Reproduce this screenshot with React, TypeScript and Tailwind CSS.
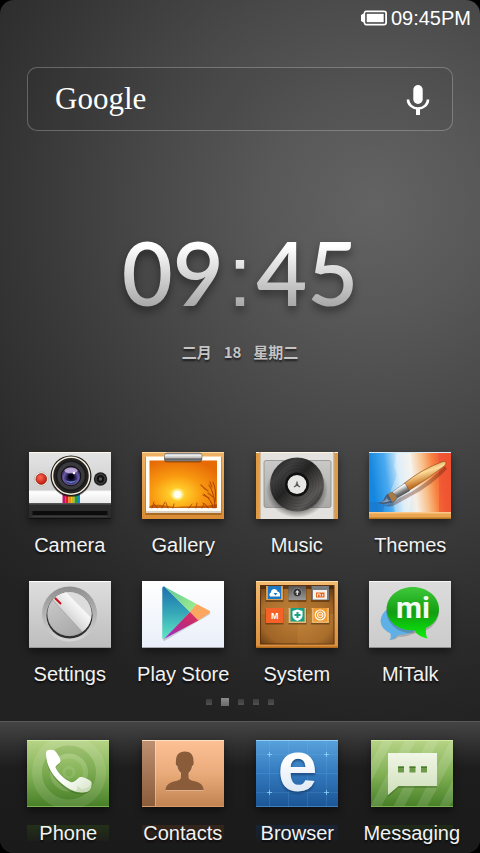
import type { ReactNode } from "react";

type AppItem = {
  name: string;
  icon: () => ReactNode;
  reflection?: string;
};

const homeApps: AppItem[] = [
  { name: "Camera", icon: CameraIcon },
  { name: "Gallery", icon: GalleryIcon },
  { name: "Music", icon: MusicIcon },
  { name: "Themes", icon: ThemesIcon },
  { name: "Settings", icon: SettingsIcon },
  { name: "Play Store", icon: PlayStoreIcon },
  { name: "System", icon: SystemIcon },
  { name: "MiTalk", icon: MiTalkIcon },
];

const dockApps: AppItem[] = [
  {
    name: "Phone",
    icon: PhoneIcon,
    reflection: "bg-linear-to-b from-[#243019] to-[#1c1f1a]",
  },
  {
    name: "Contacts",
    icon: ContactsIcon,
    reflection: "bg-linear-to-b from-[#35261c] to-[#211c19]",
  },
  {
    name: "Browser",
    icon: BrowserIcon,
    reflection: "bg-linear-to-b from-[#182434] to-[#1a1d22]",
  },
  {
    name: "Messaging",
    icon: MessagingIcon,
    reflection: "bg-linear-to-b from-[#202a18] to-[#1b1e1a]",
  },
];

export default function App() {
  return (
    <div className="min-h-screen bg-black font-['Liberation_Sans',Arial,sans-serif] text-white">
      <div className="flex min-h-screen flex-col overflow-hidden rounded-[14px] bg-[#222] bg-[radial-gradient(circle_at_78%_24%,#636363_0px,#585858_110px,#484848_230px,#373737_350px,#2a2a2a_450px,#222222_530px)]">
        <StatusBar />
        <SearchBar />
        <ClockWidget />

        <main className="grid grid-cols-4 gap-y-6 px-[13px]">
          {homeApps.map((app) => (
            <AppButton key={app.name} app={app} />
          ))}
        </main>

        <PageDots count={5} active={1} />

        <nav
          aria-label="Dock"
          className="grid grid-cols-4 border-t border-[#5a5a5a] bg-linear-to-b from-[#444] via-[#1d1d1d] via-35% to-[#1a1a1a] px-[11px] pt-[18px] pb-2"
        >
          {dockApps.map((app) => (
            <AppButton key={app.name} app={app} />
          ))}
        </nav>
      </div>
    </div>
  );
}

function StatusBar() {
  return (
    <header className="flex h-9 items-center justify-end gap-1 px-[9px] text-xl">
      <svg width="26" height="16" viewBox="0 0 26 16" aria-label="Battery">
        <path
          d="M5 0.500h18a3 3 0 0 1 3 3v9a3 3 0 0 1-3 3H5c-1.500 0-2-1-2.500-3L0 11V5l2.500-1.500C3 1.500 3.500 0.500 5 0.500z"
          fill="#fff"
        />
        <rect x="4.200" y="2.300" width="20" height="11.400" rx="1" fill="#484848" />
        <rect x="5.700" y="3.800" width="17" height="8.400" fill="#fff" />
      </svg>
      <time>09:45PM</time>
    </header>
  );
}

function SearchBar() {
  return (
    <form
      role="search"
      onSubmit={(e) => e.preventDefault()}
      className="mx-[27px] mt-[31px] flex h-16 items-center rounded-[10px] border border-white/25 bg-black/5 pr-[22px] pl-[27px]"
    >
      <label
        htmlFor="search"
        className="font-['Liberation_Serif',serif] text-[31px] leading-9"
      >
        Google
      </label>
      <input
        id="search"
        type="text"
        className="min-w-0 flex-1 bg-transparent px-3 text-xl outline-none"
      />
      <button type="button" aria-label="Voice search">
        <svg width="24" height="32" viewBox="0 0 24 32">
          <rect x="7.300" y="2" width="9.400" height="19" rx="4.700" fill="#fff" />
          <path
            d="M2 16.500a10 9 0 0 0 20 0"
            fill="none"
            stroke="#fff"
            strokeWidth="2.600"
          />
          <path d="M10 25h4v7h-4z" fill="#fff" />
        </svg>
      </button>
    </form>
  );
}

function ClockWidget() {
  return (
    <section className="flex flex-1 flex-col items-center justify-center pt-[14px] pb-2">
      <div className="drop-shadow-[0_5px_4px_rgba(0,0,0,0.4)]">
        <time className="flex items-baseline gap-1 bg-linear-to-b from-white from-20% to-[#a8a8a8] to-85% bg-clip-text font-[Lato] text-[88px] leading-[88px] font-semibold text-transparent">
          <span>09</span>
          <span className="font-['Liberation_Sans'] font-normal">:</span>
          <span>45</span>
        </time>
      </div>
      <p className="mt-[22px] flex gap-3 font-['Noto_Sans_CJK_SC',sans-serif] text-[15px] leading-5 font-bold text-[#c4c4c4] [text-shadow:0_2px_2px_rgba(0,0,0,0.6)]">
        <span>二月</span>
        <span>18</span>
        <span>星期二</span>
      </p>
    </section>
  );
}

function AppButton({ app }: { app: AppItem }) {
  const Icon = app.icon;
  return (
    <button type="button" className="flex flex-col items-center">
      <span className="shadow-[0_4px_8px_rgba(0,0,0,0.45)]">
        <Icon />
      </span>
      <span className="relative mt-[14px] text-xl leading-6 whitespace-nowrap text-[#f2f2f2] [text-shadow:0_2px_2px_rgba(0,0,0,0.7)]">
        {app.reflection && (
          <span
            className={`absolute top-1 left-1/2 h-4 w-[82px] -translate-x-1/2 ${app.reflection}`}
          />
        )}
        <span className="relative">{app.name}</span>
      </span>
    </button>
  );
}

function PageDots({ count, active }: { count: number; active: number }) {
  return (
    <div className="mt-3 mb-[15px] flex h-2 items-center justify-center gap-[9px]">
      {Array.from({ length: count }, (_, i) => (
        <span
          key={i}
          className={
            i === active
              ? "size-2 bg-linear-to-b from-[#8c8c8c] to-[#6a6a6a]"
              : "size-1.5 bg-linear-to-b from-[#3c3c3c] to-[#505050]"
          }
        />
      ))}
    </div>
  );
}

// Every launcher icon shares the same 82x67 canvas
function Tile({ children }: { children: ReactNode }) {
  return (
    <svg
      width="82"
      height="67"
      viewBox="0 0 82 67"
      className="block overflow-visible"
      aria-hidden="true"
    >
      {children}
    </svg>
  );
}

function CameraIcon() {
  return (
    <Tile>
      <defs>
        <linearGradient id="camBody" x1="0" y1="0" x2="0" y2="1">
          <stop offset="0" stopColor="#e4e4e4" />
          <stop offset="0.740" stopColor="#cfcfcf" />
          <stop offset="0.780" stopColor="#ffffff" />
          <stop offset="1" stopColor="#e8e8e8" />
        </linearGradient>
        <radialGradient id="camLens" cx="0.500" cy="0.600" r="0.550">
          <stop offset="0" stopColor="#0c0a20" />
          <stop offset="0.350" stopColor="#1d1a4a" />
          <stop offset="0.700" stopColor="#6a5aa8" />
          <stop offset="1" stopColor="#2a1c34" />
        </radialGradient>
        <radialGradient id="camRed" cx="0.400" cy="0.350" r="0.700">
          <stop offset="0" stopColor="#ff6a55" />
          <stop offset="1" stopColor="#b81408" />
        </radialGradient>
      </defs>
      <rect width="82" height="67" fill="#2c2c2c" />
      <rect width="82" height="51" fill="url(#camBody)" />
      <rect width="82" height="1" fill="#fff8e8" />
      <rect y="51" width="82" height="1.500" fill="#555" />
      <rect x="3.500" y="59" width="75" height="5" fill="#0c0c0c" />
      <rect x="3.500" y="63.500" width="75" height="1" fill="#505050" />
      <rect y="66" width="82" height="1" fill="#111" />
      <rect x="33.500" y="42" width="3" height="9" fill="#c4126e" />
      <rect x="36.500" y="42" width="3" height="9" fill="#e0201c" />
      <rect x="39.500" y="42" width="3" height="9" fill="#ef8f10" />
      <rect x="42.500" y="42" width="3" height="9" fill="#c9b50e" />
      <rect x="45.500" y="42" width="2.500" height="9" fill="#2d9c35" />
      <rect x="48" y="42" width="3" height="9" fill="#1488c8" />
      <circle cx="42" cy="24.500" r="20.500" fill="#000" opacity="0.500" />
      <circle cx="42" cy="23.700" r="20.300" fill="#1c1a18" />
      <circle cx="42" cy="23.700" r="18.500" fill="#232323" stroke="#f3ead8" strokeWidth="1.500" />
      <circle cx="42" cy="23.700" r="14.500" fill="#3a3a3e" stroke="#191919" strokeWidth="1.500" />
      <circle cx="42" cy="24" r="9.800" fill="url(#camLens)" stroke="#111" />
      <ellipse cx="42" cy="18.500" rx="6.500" ry="3" fill="#d9c4f0" opacity="0.750" />
      <path d="M36 28q6 6 12 0q-6 3-12 0z" fill="#7fb4ff" opacity="0.800" />
      <circle cx="42" cy="24.500" r="3" fill="#05040d" />
      <circle cx="45" cy="21" r="1.200" fill="#fff" />
      <circle cx="12.300" cy="27" r="7" fill="#f4f2ee" stroke="#b0aeaa" strokeWidth="0.600" />
      <circle cx="12.300" cy="27" r="5.400" fill="url(#camRed)" stroke="#8a1208" strokeWidth="0.600" />
      <circle cx="71.500" cy="27" r="6.700" fill="#222" />
      <circle cx="71.500" cy="27" r="4.500" fill="#111" stroke="#4b4b4b" />
      <circle cx="71.500" cy="27" r="1.700" fill="#555" />
    </Tile>
  );
}

function GalleryIcon() {
  return (
    <Tile>
      <defs>
        <linearGradient id="galWood" x1="0" y1="0" x2="0" y2="1">
          <stop offset="0" stopColor="#efb266" />
          <stop offset="1" stopColor="#d98c35" />
        </linearGradient>
        <radialGradient id="galSky" cx="0.410" cy="0.700" r="0.750">
          <stop offset="0" stopColor="#fff27a" />
          <stop offset="0.180" stopColor="#ffc928" />
          <stop offset="0.500" stopColor="#f99a10" />
          <stop offset="1" stopColor="#e66a06" />
        </radialGradient>
        <linearGradient id="galClip" x1="0" y1="0" x2="0" y2="1">
          <stop offset="0" stopColor="#777" />
          <stop offset="0.250" stopColor="#f5f5f5" />
          <stop offset="0.600" stopColor="#b8b8b8" />
          <stop offset="0.750" stopColor="#555" />
          <stop offset="1" stopColor="#999" />
        </linearGradient>
      </defs>
      <rect width="82" height="67" fill="url(#galWood)" />
      <rect width="82" height="1" fill="#ffd9a0" />
      <rect x="3.500" y="5" width="76" height="58" fill="#8a5212" opacity="0.600" />
      <rect x="4" y="4.500" width="75" height="56.500" fill="#fffdf6" />
      <rect x="4" y="59" width="75" height="2" fill="#d9d2c4" />
      <rect x="7.500" y="8.500" width="67.500" height="47.500" fill="url(#galSky)" />
      <circle cx="35.500" cy="42.500" r="6" fill="#fff6a0" opacity="0.600" />
      <circle cx="35.500" cy="42.500" r="3.800" fill="#fffef0" />
      <path
        d="M7.500 56v-2q6-2 12-1t14 2q14-1 24-1t17.500-2v4z"
        fill="#a23c05"
        opacity="0.600"
      />
      <g fill="none" stroke="#a23c05" strokeLinecap="round">
        <path d="M10 56l2-6M15 56l-3-4M20 56l3-6M26 56l-2-5M31 56l1-4M47 56l3-4M54 56l1-5M60 56l2-4" strokeWidth="0.800" />
        <path d="M73 56q0-14-6-23M71 56q-1-8-9-14M73 50q2-12-2-20M66 56q-2-4-5-5" strokeWidth="0.900" />
        <path d="M63 37l-4-4M66 39l-5-4M70 35l-2-5M71 45l-5-4M67 46l-6-3" strokeWidth="1.200" opacity="0.700" />
      </g>
      <rect x="22" y="3" width="38" height="7.500" rx="3" fill="#5a3208" opacity="0.500" />
      <rect x="22.500" y="1" width="37.500" height="8" rx="2.500" fill="url(#galClip)" stroke="#555" strokeWidth="0.500" />
    </Tile>
  );
}

function MusicIcon() {
  return (
    <Tile>
      <defs>
        <linearGradient id="musPlate" x1="0" y1="0" x2="0" y2="1">
          <stop offset="0" stopColor="#c9c9c7" />
          <stop offset="1" stopColor="#a9a9a7" />
        </linearGradient>
        <linearGradient id="musDisc" x1="0" y1="0" x2="1" y2="1">
          <stop offset="0" stopColor="#1c1c1c" />
          <stop offset="0.250" stopColor="#3f3f3f" />
          <stop offset="0.450" stopColor="#242424" />
          <stop offset="0.750" stopColor="#5c5a58" />
          <stop offset="1" stopColor="#1a1a1a" />
        </linearGradient>
        <radialGradient id="musShade">
          <stop offset="0.700" stopColor="#000" stopOpacity="0.500" />
          <stop offset="1" stopColor="#000" stopOpacity="0" />
        </radialGradient>
      </defs>
      <rect width="82" height="67" fill="#df9a43" />
      <rect x="3.500" width="75" height="67" fill="#e3e2de" />
      <rect width="82" height="1" fill="#fff6e4" />
      <rect x="3.500" width="1" height="67" fill="#a86a20" opacity="0.600" />
      <rect x="77.500" width="1" height="67" fill="#a86a20" opacity="0.600" />
      <rect x="8" y="8.500" width="67" height="47" rx="2" fill="url(#musPlate)" stroke="#8e8e8c" strokeWidth="0.800" />
      <ellipse cx="41" cy="38" rx="31" ry="28" fill="url(#musShade)" />
      <circle cx="41" cy="32.500" r="27" fill="url(#musDisc)" />
      <g fill="none" stroke="#000" strokeOpacity="0.150" strokeWidth="0.700">
        <circle cx="41" cy="32.500" r="25" />
        <circle cx="41" cy="32.500" r="22" />
        <circle cx="41" cy="32.500" r="19" />
        <circle cx="41" cy="32.500" r="16" />
      </g>
      <circle cx="41" cy="32.500" r="12" fill="#101010" />
      <circle cx="41" cy="32.500" r="9.500" fill="#e6e6e4" />
      <path d="M41 29.500v3.500l-3 2M41 33l3 2" fill="none" stroke="#555" strokeWidth="1.300" />
      <circle cx="41" cy="32.800" r="1.400" fill="#555" />
    </Tile>
  );
}

function ThemesIcon() {
  return (
    <Tile>
      <defs>
        <linearGradient id="thPaint" x1="0" y1="0.100" x2="1" y2="0">
          <stop offset="0" stopColor="#1487e0" />
          <stop offset="0.180" stopColor="#49a9ef" />
          <stop offset="0.340" stopColor="#cfe8f7" />
          <stop offset="0.500" stopColor="#f6efe6" />
          <stop offset="0.640" stopColor="#f8bf88" />
          <stop offset="0.760" stopColor="#f8813f" />
          <stop offset="0.850" stopColor="#f2603a" />
          <stop offset="1" stopColor="#ee5434" />
        </linearGradient>
        <linearGradient id="thHandle" x1="0" y1="0" x2="0.450" y2="1">
          <stop offset="0.200" stopColor="#d08a3a" />
          <stop offset="0.480" stopColor="#ffdc9a" />
          <stop offset="0.800" stopColor="#c07022" />
        </linearGradient>
        <linearGradient id="thMetal" x1="0" y1="0" x2="0.600" y2="1">
          <stop offset="0.100" stopColor="#666" />
          <stop offset="0.400" stopColor="#fff" />
          <stop offset="0.700" stopColor="#777" />
          <stop offset="1" stopColor="#333" />
        </linearGradient>
      </defs>
      <rect width="82" height="67" fill="#e9a550" />
      <rect width="82" height="60.500" fill="url(#thPaint)" />
      <path d="M28 0l-3 14 3 9-6 15 4 22h14l4-26-2-34z" fill="#fff" opacity="0.300" />
      <path d="M0 50h16l-2 10.500H0z" fill="#1a6fc0" opacity="0.450" />
      <path d="M70 0h12v60.500H70z" fill="#ee4d2b" opacity="0.500" />
      <rect width="82" height="1" fill="#d6ecfa" />
      <rect y="60" width="82" height="1.500" fill="#f8c888" />
      <rect y="65.500" width="82" height="1.500" fill="#b97422" />
      <path d="M14 53q10 0 16-7l12-6q20-12 34-26l2 3Q62 34 42 44L26 53q-6 3-12 0z" fill="#5a1a08" opacity="0.350" />
      <path d="M35 31.500Q53 17 74 9.500q3-.5 3 1.500 0 2-3 4Q60 26 40 38.500z" fill="url(#thHandle)" stroke="#96531a" strokeWidth="0.700" />
      <path d="M36 31l4.500 8L28 46q-3-2-5-6z" fill="url(#thMetal)" stroke="#444" strokeWidth="0.400" />
      <path d="M23 40q4 2 5.500 6-3 6-10 5.500-5 1-10-.5 6-1 7-5t7.500-6z" fill="#4a5d74" />
      <path d="M22.500 40q4 2 5.500 6-2 3-5 4-2-5-4-8z" fill="#a97a45" />
      <path d="M12 50q5-1 6-5 0 4 4 3-4 3-10 2z" fill="#7f9fc6" />
    </Tile>
  );
}

function SettingsIcon() {
  return (
    <Tile>
      <defs>
        <linearGradient id="setBg" x1="0" y1="0" x2="0" y2="1">
          <stop offset="0" stopColor="#dedede" />
          <stop offset="1" stopColor="#bdbdbd" />
        </linearGradient>
        <linearGradient id="setRing" x1="0" y1="0" x2="0" y2="1">
          <stop offset="0" stopColor="#8f8f8f" />
          <stop offset="1" stopColor="#d6d6d6" />
        </linearGradient>
        <linearGradient id="setBand" gradientUnits="userSpaceOnUse" x1="38" y1="36" x2="50" y2="24">
          <stop offset="0" stopColor="#d2d2d2" />
          <stop offset="0.500" stopColor="#e8e8e8" />
          <stop offset="1" stopColor="#f8f8f8" />
        </linearGradient>
        <linearGradient id="setLow" x1="0" y1="0" x2="0.600" y2="1">
          <stop offset="0" stopColor="#cfcfcf" />
          <stop offset="1" stopColor="#a8a8a8" />
        </linearGradient>
        <clipPath id="setKnob">
          <circle cx="40.500" cy="33" r="22" />
        </clipPath>
      </defs>
      <rect width="82" height="67" fill="url(#setBg)" />
      <rect width="82" height="1" fill="#fff" />
      <rect y="66" width="82" height="1" fill="#999" />
      <circle cx="40.500" cy="33" r="27.500" fill="url(#setRing)" />
      <circle cx="40.500" cy="34.500" r="23" fill="#2e2e2e" />
      <circle cx="40.500" cy="33" r="22.300" fill="#777" />
      <g clipPath="url(#setKnob)">
        <rect x="18" y="10" width="46" height="46" fill="url(#setLow)" />
        <path d="M30 6h38v38z" fill="#dcdcdc" />
        <path d="M20 15L31 5l37 38-11 12z" fill="url(#setBand)" />
        <path d="M20 15l37 40" stroke="#999" strokeWidth="0.600" />
        <path d="M54 52l10-12 4 8-9 10z" fill="#3a3a3a" />
      </g>
      <path d="M26 17l6 6" stroke="#c8101c" strokeWidth="2" />
    </Tile>
  );
}

function PlayStoreIcon() {
  return (
    <Tile>
      <defs>
        <linearGradient id="playBg" x1="0" y1="0" x2="0" y2="1">
          <stop offset="0" stopColor="#ffffff" />
          <stop offset="1" stopColor="#e9eff9" />
        </linearGradient>
        <linearGradient id="playBlue" x1="0" y1="0" x2="0" y2="1">
          <stop offset="0" stopColor="#1c6fae" />
          <stop offset="0.500" stopColor="#35a7b8" />
          <stop offset="1" stopColor="#5fe6c4" />
        </linearGradient>
        <linearGradient id="playGreen" x1="0" y1="0" x2="1" y2="1">
          <stop offset="0" stopColor="#5cc79a" />
          <stop offset="1" stopColor="#a4f08c" />
        </linearGradient>
        <linearGradient id="playPurple" x1="0" y1="1" x2="1" y2="0">
          <stop offset="0" stopColor="#9a2fd0" />
          <stop offset="0.600" stopColor="#c22a72" />
          <stop offset="1" stopColor="#e0325c" />
        </linearGradient>
      </defs>
      <rect width="82" height="67" fill="url(#playBg)" />
      <rect y="66" width="82" height="1" fill="#a8aab0" />
      <path d="M20.500 8l48 25-46 27q-2 0-2-2z" fill="#8b95a8" opacity="0.400" />
      <path d="M20.300 7q0-2 2-1.500L48 31 22.500 57.500q-2.200 1-2.200-1z" fill="url(#playBlue)" />
      <path d="M22 5.400L54.700 23 48 31z" fill="url(#playGreen)" />
      <path d="M54.700 23L67 29.500q2.500 1.500 0 3L56.300 39.500 48 31z" fill="#fba75f" />
      <path d="M48 31l8.300 8.500L22 58z" fill="url(#playPurple)" />
    </Tile>
  );
}

function SystemIcon() {
  return (
    <Tile>
      <defs>
        <linearGradient id="sysFrame" x1="0" y1="0" x2="0" y2="1">
          <stop offset="0" stopColor="#f3bb70" />
          <stop offset="1" stopColor="#d98e3a" />
        </linearGradient>
        <radialGradient id="sysBack" cx="0.500" cy="0.550" r="0.700">
          <stop offset="0" stopColor="#bd8038" />
          <stop offset="0.700" stopColor="#a06526" />
          <stop offset="1" stopColor="#603610" />
        </radialGradient>
        <linearGradient id="sysGray" x1="0" y1="0" x2="0" y2="1">
          <stop offset="0" stopColor="#555" />
          <stop offset="1" stopColor="#999" />
        </linearGradient>
      </defs>
      <rect width="82" height="67" fill="url(#sysFrame)" />
      <rect width="82" height="1" fill="#ffe0ae" />
      <rect y="65.500" width="82" height="1.500" fill="#b06a1e" />
      <rect x="4.500" y="4.500" width="73.500" height="58.500" fill="url(#sysBack)" stroke="#5c330e" />
      <path d="M41.500 33h36v30h-36zM5 5h36.500v28H5z" fill="#e0a050" opacity="0.160" />
      <rect x="5" y="5" width="72.500" height="3" fill="#3a1e06" opacity="0.600" />
      <g fill="#3c2005" opacity="0.500">
        <rect x="9.500" y="6" width="18" height="15" />
        <rect x="32.500" y="6" width="18" height="15" />
        <rect x="55" y="6" width="18.500" height="15" />
        <rect x="9.500" y="28" width="18" height="15.500" />
        <rect x="32.500" y="28" width="18" height="15.500" />
        <rect x="55" y="28" width="18.500" height="15.500" />
      </g>
      <rect x="10" y="5" width="17" height="14" fill="#dba055" />
      <rect x="12" y="5" width="13" height="13" fill="#1d78c4" />
      <path d="M14 15.500q-1.500-3 1-4 0-3.500 3.500-3.500 2.500 0 3 2.500 3 .5 2.500 5z" fill="#fff" />
      <path d="M17.500 12h4l-2 2.500z" fill="#1d78c4" />
      <rect x="32.500" y="5" width="17.500" height="14" fill="url(#sysGray)" />
      <circle cx="41.300" cy="11.500" r="4.300" fill="#333" stroke="#aaa" strokeWidth="0.600" />
      <path d="M41.300 9l2.200 2.500h-1.500v2.500h-1.400v-2.500h-1.500z" fill="#ddd" />
      <rect x="55.500" y="5" width="17.500" height="14" fill="#777c80" />
      <rect x="57" y="9" width="14" height="9.500" fill="#f5f2ee" />
      <rect x="60" y="11.500" width="8.500" height="5" fill="#e8641a" />
      <path d="M61.500 15.500v-2.500h2.700v2.500M66.700 13v2.500" fill="none" stroke="#fff" strokeWidth="0.900" />
      <rect x="10" y="27" width="17.500" height="15" fill="#f4622a" />
      <text
        x="18.700"
        y="38"
        fontSize="9"
        fontWeight="700"
        textAnchor="middle"
        fill="#fff"
        className="font-['Liberation_Sans']"
      >
        M
      </text>
      <rect x="32.500" y="27" width="17.500" height="15" fill="#e8bc7c" />
      <rect x="34.500" y="27" width="14" height="13.500" fill="#16a085" />
      <path d="M41.500 28.500l5 1.500v4.500q0 3.500-5 5.500-5-2-5-5.500V30z" fill="#fff" />
      <path d="M40.500 31h2v2h2v2h-2v2h-2v-2h-2v-2h2z" fill="#16a085" />
      <rect x="55.500" y="27" width="17.500" height="15" fill="#e9b873" />
      <rect x="57.500" y="27" width="13.500" height="13.500" fill="#f09a30" />
      <circle cx="64.200" cy="34" r="5" fill="none" stroke="#fff" strokeWidth="1.200" />
      <circle cx="64.200" cy="34" r="2.800" fill="none" stroke="#fff" strokeWidth="1" />
      <path d="M62.500 34h3.500" stroke="#fff" />
    </Tile>
  );
}

function MiTalkIcon() {
  return (
    <Tile>
      <defs>
        <linearGradient id="talkBg" x1="0" y1="0" x2="0" y2="1">
          <stop offset="0" stopColor="#dcdcdc" />
          <stop offset="1" stopColor="#cbcbcb" />
        </linearGradient>
        <linearGradient id="talkGreen" x1="0" y1="0" x2="0" y2="1">
          <stop offset="0" stopColor="#3ec83a" />
          <stop offset="0.500" stopColor="#129e12" />
          <stop offset="0.750" stopColor="#0cc80c" />
          <stop offset="1" stopColor="#12ea12" />
        </linearGradient>
      </defs>
      <rect width="82" height="67" fill="url(#talkBg)" />
      <rect width="82" height="1" fill="#f6f6f6" />
      <rect y="66" width="82" height="1" fill="#8f8f8f" />
      <path d="M20 27q-8 5-8.500 13 .5 8 10 12.500 1 4-1 6.500 6-1 8-5 12 0 18-5z" fill="#5fb0e6" />
      <path d="M20 59q7-2 8-5 12 0 17-4v2q-6 4-16 4-2 3-9 3z" fill="#777" opacity="0.400" />
      <ellipse cx="43.700" cy="30" rx="26.500" ry="22.500" fill="#333" opacity="0.250" />
      <path
        d="M43.700 6C58 6 70 15.500 70 28c0 8.500-5 15.500-13 19-.5 4 0 7.500 1.500 10.500-6-1-11-4-13-8.200C29 50 17.700 40.500 17.700 28 17.700 15.500 29.500 6 43.700 6z"
        fill="url(#talkGreen)"
      />
      <text
        x="44"
        y="37"
        fontSize="30"
        fontWeight="700"
        textAnchor="middle"
        fill="#f4fbf2"
        className="font-[Roboto]"
      >
        mi
      </text>
    </Tile>
  );
}

function PhoneIcon() {
  return (
    <Tile>
      <defs>
        <linearGradient id="phBg" x1="0" y1="0" x2="0" y2="1">
          <stop offset="0" stopColor="#b6d486" />
          <stop offset="0.500" stopColor="#83b156" />
          <stop offset="1" stopColor="#467f26" />
        </linearGradient>
        <linearGradient id="phSet" x1="0" y1="0" x2="1" y2="1">
          <stop offset="0.500" stopColor="#ffffff" />
          <stop offset="1" stopColor="#d5e4c4" />
        </linearGradient>
        <clipPath id="phTile">
          <rect width="82" height="67" />
        </clipPath>
      </defs>
      <rect width="82" height="67" fill="url(#phBg)" />
      <rect width="82" height="1" fill="#d3eaa6" />
      <rect y="66" width="82" height="1" fill="#7bb04e" />
      <g
        fill="none"
        stroke="#fff"
        strokeOpacity="0.100"
        clipPath="url(#phTile)"
      >
        <circle cx="42" cy="32.500" r="32" strokeWidth="10" />
        <circle cx="42" cy="32.500" r="16.500" strokeWidth="5" />
        <circle cx="42" cy="32.500" r="5" strokeWidth="3" />
      </g>
      <circle cx="42" cy="32.500" r="23" fill="none" stroke="#2e6a18" strokeOpacity="0.120" strokeWidth="8" />
      <path
        d="M19 14.500c0-3 3-4 6-4 2 0 7 6.500 8.500 11.500-.5 3-4.500 3.500-5 6.500 2 5 9 13 15 15.500 4 1.500 7-5 9.500-6 3-1 10 2.500 11.500 5 .5 4.500-.5 8-3.500 9.500-7 3.500-17 1.500-27-7.500s-15-19-15-30.500z"
        fill="#2d5c18"
        opacity="0.350"
      />
      <path
        d="M19 13c0-3 3-3.500 6-3 3 0 3 1 4 2 2 3 4.500 6 4.500 9-.5 3-4.500 3.500-5 6.500 2 5 9 12 15 14.500 4 1.500 7-4 9.500-5 3-.5 10 2.500 11.500 5 .5 4.500-.5 8-3.500 9.500-7 2.500-17 .5-27-8.500S19 24.500 19 13z"
        fill="url(#phSet)"
      />
      <path d="M50 46l5 3q5 0 9-4-.5 5-3.500 6.500-6 2-14 0 5-1 3.500-5.500z" fill="#b9cfa4" opacity="0.500" />
    </Tile>
  );
}

function ContactsIcon() {
  return (
    <Tile>
      <defs>
        <linearGradient id="conBg" x1="0" y1="0" x2="0" y2="1">
          <stop offset="0" stopColor="#fdc195" />
          <stop offset="0.500" stopColor="#eaab7b" />
          <stop offset="1" stopColor="#c08350" />
        </linearGradient>
        <linearGradient id="conSpine" x1="0" y1="0" x2="0" y2="1">
          <stop offset="0" stopColor="#bd9072" />
          <stop offset="1" stopColor="#8a5c3a" />
        </linearGradient>
      </defs>
      <rect width="82" height="67" fill="url(#conBg)" />
      <rect width="13" height="67" fill="url(#conSpine)" />
      <rect x="13" width="1" height="67" fill="#fff" opacity="0.300" />
      <rect width="82" height="1" fill="#ffe0c4" />
      <rect y="66" width="82" height="1" fill="#d79a68" />
      <path
        d="M24 51c.5-5 3-7 8-8.500 5-1 7-2 7-5V34c-2-2-3.300-4-3.500-7-1.500-.5-2-2-1.500-5 0-6 3-10 8.700-10s9 4 8.800 10c.5 3 0 4.500-1.500 5-.2 3-1.500 5-3.500 7v3.500c0 3 2 4 7 5 5 1.500 7.700 3.500 8.200 8.500z"
        fill="#fff"
        opacity="0.250"
      />
      <path
        d="M23.500 50c.5-5 3.500-7 8.500-8.500 5-1 7-2 7-5V33c-2-2-3.300-4-3.500-7-1.500-.5-2-2-1.500-5 0-6 3-9.500 8.700-9.500s9 3.500 8.800 9.500c.5 3 0 4.500-1.500 5-.2 3-1.500 5-3.500 7v3.500c0 3 2 4 7 5 5 1.500 7.700 3.500 8.200 8.500z"
        fill="#8a5c3a"
      />
    </Tile>
  );
}

function BrowserIcon() {
  return (
    <Tile>
      <defs>
        <linearGradient id="brBg" x1="0" y1="0" x2="0" y2="1">
          <stop offset="0" stopColor="#58a2dc" />
          <stop offset="0.500" stopColor="#3279bd" />
          <stop offset="1" stopColor="#1b5596" />
        </linearGradient>
        <linearGradient id="brE" x1="0" y1="0" x2="0" y2="1">
          <stop offset="0.400" stopColor="#ffffff" />
          <stop offset="1" stopColor="#cfdff0" />
        </linearGradient>
      </defs>
      <rect width="82" height="67" fill="url(#brBg)" />
      <rect width="82" height="1" fill="#94cdf5" />
      <rect y="66" width="82" height="1" fill="#3c80bf" />
      <path
        d="M13.500 0v67M32.500 0v67M51.500 0v67M70.500 0v67M0 14.500h82M0 33.500h82M0 52.500h82"
        stroke="#8cd0ff"
        strokeOpacity="0.180"
        strokeWidth="0.800"
      />
      <path
        d="M13.500 12v5M11 14.500h5M70.500 12v5M68 14.500h5M13.500 50v5M11 52.500h5M70.500 50v5M68 52.500h5"
        stroke="#8fe0ff"
        strokeOpacity="0.700"
      />
      <text
        x="41.500"
        y="51"
        fontSize="72"
        fontWeight="700"
        textAnchor="middle"
        fill="url(#brE)"
        className="font-['Liberation_Sans'] drop-shadow-[0_2px_1px_rgba(10,45,90,0.6)]"
      >
        e
      </text>
    </Tile>
  );
}

function MessagingIcon() {
  return (
    <Tile>
      <defs>
        <linearGradient id="msBg" x1="0" y1="0" x2="0" y2="1">
          <stop offset="0" stopColor="#b6d486" />
          <stop offset="0.500" stopColor="#83b156" />
          <stop offset="1" stopColor="#467f26" />
        </linearGradient>
        <linearGradient id="msBubble" x1="0" y1="0" x2="0" y2="1">
          <stop offset="0" stopColor="#f0f6e6" />
          <stop offset="1" stopColor="#cfdfba" />
        </linearGradient>
      </defs>
      <rect width="82" height="67" fill="url(#msBg)" />
      <path
        d="M12 0h10L0 42V22zM34 0h11L10 67H0v-2zM57 0h11L33 67H22zM80 0h2v18L56 67H45zM82 40v20l-4 7H68z"
        fill="#fff"
        opacity="0.120"
      />
      <rect width="82" height="1" fill="#d3eaa6" />
      <rect y="66" width="82" height="1" fill="#7bb04e" />
      <path d="M17 15h49v33H27.500L17 57z" fill="#2d5c18" opacity="0.350" />
      <path d="M17 13h49v33H27.500L17 55z" fill="url(#msBubble)" />
      <path d="M27 26.500h6v6h-6zM38.500 26.500h6v6h-6zM50 26.500h6v6h-6z" fill="#6d9a48" />
      <path d="M27 26.500h6v1.500h-6zM38.500 26.500h6v1.500h-6zM50 26.500h6v1.500h-6z" fill="#4b7a2c" />
    </Tile>
  );
}
